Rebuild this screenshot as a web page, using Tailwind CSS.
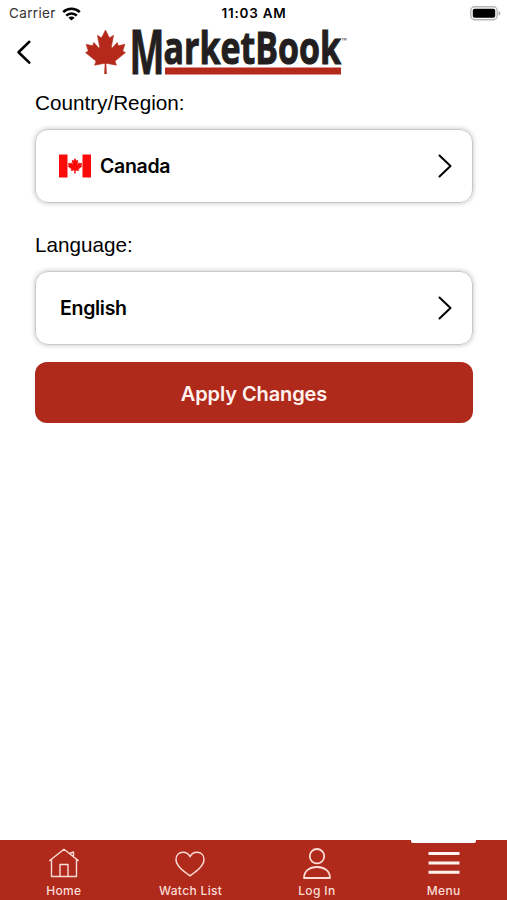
<!DOCTYPE html>
<html lang="en">
<head>
    <meta charset="UTF-8">
    <meta name="viewport" content="width=device-width, initial-scale=1">
    <title>MarketBook - Country &amp; Language</title>
    <script src="https://cdn.jsdelivr.net/npm/@tailwindcss/browser@4"></script>
</head>
<body class="bg-white text-black font-[Inter,sans-serif]">
    <svg class="hidden">
        <symbol id="leaf" viewBox="-1900 -2000 3800 4030" preserveAspectRatio="none">
            <path d="m-90 2030 45-863a95 95 0 0 0-111-98l-859 151 116-320a65 65 0 0 0-20-73l-941-762 212-99a65 65 0 0 0 34-79l-186-572 542 115a65 65 0 0 0 73-38l105-247 423 454a65 65 0 0 0 111-57l-204-1052 327 189a65 65 0 0 0 91-27l332-652 332 652a65 65 0 0 0 91 27l327-189-204 1052a65 65 0 0 0 111 57l423-454 105 247a65 65 0 0 0 73 38l542-115-186 572a65 65 0 0 0 34 79l212 99-941 762a65 65 0 0 0-20 73l116 320-859-151a95 95 0 0 0-111 98l45 863z"/>
        </symbol>
    </svg>

    <div class="flex h-[900px] w-[507px] flex-col overflow-hidden">
        <!-- Status bar -->
        <div class="grid h-[26px] grid-cols-3 items-center pl-[9px] pr-[6px] pt-px text-[13px] leading-none">
            <div class="flex items-center gap-[6px]">
                <span class="text-[13.5px] tracking-[0.35px] text-[#333]">Carrier</span>
                <svg class="h-[14px] w-[19px]" viewBox="0 0 19 14" fill="none" stroke="#000" stroke-width="2.5">
                    <path d="M1.2 5.2a11.8 11.8 0 0 1 16.6 0"/>
                    <path d="M4.2 8.6a7.5 7.5 0 0 1 10.6 0"/>
                    <path d="M9.5 13.6 6.4 10.7a4.3 4.3 0 0 1 6.2 0z" fill="#000" stroke="none"/>
                </svg>
            </div>
            <span class="mr-[2px] pt-px text-center text-[13.5px] font-semibold tracking-[0.75px] whitespace-nowrap">11:03 AM</span>
            <svg class="h-[15px] w-[31px] justify-self-end" viewBox="0 0 31 15">
                <rect x=".8" y=".8" width="26.4" height="13" rx="4" fill="#fff" stroke="#b5b5b5" stroke-width="1.4"/>
                <rect x="2.8" y="2.8" width="22.4" height="9" rx="1.8"/>
                <path d="M28.6 5v4.6q1.8-.6 1.8-2.3t-1.8-2.3z" fill="#aaa"/>
            </svg>
        </div>

        <!-- Header -->
        <header class="flex h-[54px] pl-4">
            <svg class="mt-[13px] h-[26px] w-[17px]" viewBox="0 0 17 26" fill="none" stroke="#000" stroke-width="2.6" stroke-linecap="round" stroke-linejoin="round">
                <path d="M13.3 2.8 2.5 13.2l10.8 10.4"/>
            </svg>
            <svg class="ml-[47px] h-[54px] w-[275px] overflow-visible" viewBox="80 26 275 54">
                <use href="#leaf" x="85" y="30" width="41" height="44" fill="#b5291b" stroke="#b5291b" stroke-width="50"/>
                <g font-family="Open Sans, sans-serif" font-weight="700" fill="#231f20" stroke="#231f20">
                    <text x="129.5" y="74" font-size="61" stroke-width=".9" textLength="35" lengthAdjust="spacingAndGlyphs">M</text>
                    <text x="163.5" y="63.5" font-size="45.5" stroke-width="1.1" textLength="177.5" lengthAdjust="spacingAndGlyphs">arketBook</text>
                </g>
                <text x="341.5" y="43" font-family="Open Sans, sans-serif" font-size="7" fill="#444">™</text>
                <rect x="165" y="67.5" width="176" height="7" fill="#b5291b"/>
            </svg>
        </header>

        <!-- Settings form -->
        <main class="flex-1 px-[35px] pt-[11px]">
            <label class="block h-[38px] font-['Liberation_Sans',sans-serif] text-[20.7px] leading-6">Country/Region:</label>
            <button class="flex h-[74px] w-[438px] items-center rounded-[13px] border border-[#c9c9c9] px-[24px] text-left shadow-[0_0_5px_rgba(0,0,0,0.25)]">
                <svg class="ml-[-1px] h-[24px] w-[32px]" viewBox="0 0 32 24">
                    <path d="M0 .5h8.5v23H0zM23.5 .5H32v23h-8.5z" fill="#fb0a0a"/>
                    <use href="#leaf" x="9" y="4.5" width="14" height="15" fill="#fb0a0a" stroke="#fb0a0a" stroke-width="220"/>
                </svg>
                <span class="ml-[9px] flex-1 pt-[2px] text-[19.5px] font-semibold tracking-[-0.3px]">Canada</span>
                <svg class="h-[24px] w-[14px] mr-[-4px]" viewBox="0 0 14 24" fill="none" stroke="#000" stroke-width="2" stroke-linecap="round" stroke-linejoin="round">
                    <path d="M1.5 1.5 12.5 12l-11 10.5"/>
                </svg>
            </button>

            <label class="mt-[30px] block h-[38px] font-['Liberation_Sans',sans-serif] text-[20.7px] leading-6">Language:</label>
            <button class="flex h-[74px] w-[438px] items-center rounded-[13px] border border-[#c9c9c9] px-[24px] text-left shadow-[0_0_5px_rgba(0,0,0,0.25)]">
                <span class="flex-1 pt-[2px] text-[19.5px] font-semibold tracking-[-0.3px]">English</span>
                <svg class="h-[24px] w-[14px] mr-[-4px]" viewBox="0 0 14 24" fill="none" stroke="#000" stroke-width="2" stroke-linecap="round" stroke-linejoin="round">
                    <path d="M1.5 1.5 12.5 12l-11 10.5"/>
                </svg>
            </button>

            <button class="mt-[17px] h-[61px] w-[438px] rounded-[12px] bg-[#b02a1b] pt-[2px] text-[20px] font-semibold tracking-[-0.1px] text-[#fff3f0]">Apply Changes</button>
        </main>

        <!-- Tab bar -->
        <nav class="grid h-[60px] grid-cols-4 bg-[#b02a1b] text-[12px] font-medium leading-none tracking-[0.35px] text-[#fbdcd6]">
            <a class="flex flex-col items-center pt-[8px]">
                <svg class="ml-[2px] h-[30px] w-[32px]" viewBox="0 0 32 30" fill="none" stroke="#fbdcd6" stroke-width="1.4" stroke-linejoin="round" stroke-linecap="round">
                    <path d="M1.8 12.5 16 1.2l14.2 11.3M3.5 11.5v17h25v-17M12 28.5v-12h8v12M21.5 5.5l4-1.5v5"/>
                </svg>
                <span class="mt-[7px] ml-px">Home</span>
            </a>
            <a class="flex flex-col items-center pt-[8px]">
                <svg class="h-[30px] w-[32px]" viewBox="0 0 32 30" fill="none" stroke="#fbdcd6" stroke-width="1.5" stroke-linejoin="round">
                    <path d="M16 27.8C10 23.5 2 18 2 11.5 2 7 5 4.2 9 4.2c3.2 0 5.7 1.8 7 4.6 1.3-2.8 3.8-4.6 7-4.6 4 0 7 2.8 7 7.3 0 6.5-8 12-14 16.3z"/>
                </svg>
                <span class="mt-[7px] ml-px">Watch List</span>
            </a>
            <a class="flex flex-col items-center pt-[8px]">
                <svg class="h-[31px] w-[32px]" viewBox="0 0 32 31" fill="none" stroke="#fbdcd6" stroke-width="1.8" stroke-linejoin="round">
                    <circle cx="16" cy="8.2" r="7.2"/>
                    <path d="M3 30c0-7 5.5-11 13-11s13 4 13 11z"/>
                </svg>
                <span class="mt-[6px]">Log In</span>
            </a>
            <a class="relative flex flex-col items-center pt-[8px]">
                <span class="absolute top-0 h-[3px] w-[65px] rounded-b-[2px] bg-white"></span>
                <svg class="h-[30px] w-[32px]" viewBox="0 0 32 30" fill="#fff3f0">
                    <path d="M.5 4h31v3H.5zM.5 13.5h31v3H.5zM.5 22.7h31v3H.5z"/>
                </svg>
                <span class="mt-[7px]">Menu</span>
            </a>
        </nav>
    </div>
</body>
</html>
